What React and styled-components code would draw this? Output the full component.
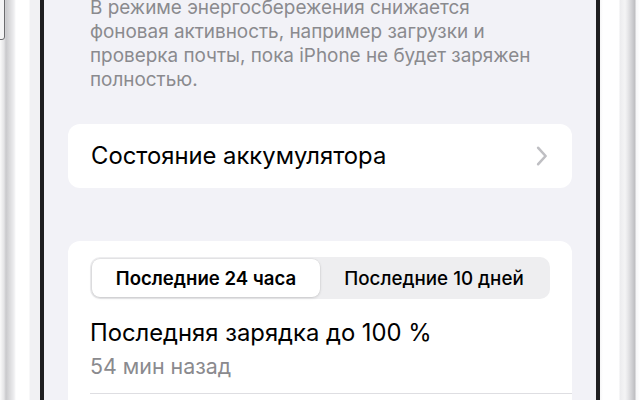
import styled, { createGlobalStyle } from "styled-components";
import { useState } from "react";

const Global = createGlobalStyle`
  html, body {
    margin: 0;
    padding: 0;
    background: #ffffff;
    overflow: hidden;
  }
  body {
    font-family: Inter, "Noto Sans", "Liberation Sans", sans-serif;
    -webkit-font-smoothing: antialiased;
  }
`;

export default function App() {
  const [range, setRange] = useState("24h");
  return (
    <>
      <Global />
      <Phone>
        <LeftRim>
          <SideButton />
        </LeftRim>
        <Bezel />
        <Screen>
          <Footnote>
            В режиме энергосбережения снижается
            <br />
            фоновая активность, например загрузки и
            <br />
            проверка почты, пока iPhone не будет заряжен
            <br />
            полностью.
          </Footnote>

          <Card>
            <LinkRow>
              <RowLabel>Состояние аккумулятора</RowLabel>
              <svg width="12" height="20" viewBox="0 0 12 20" fill="none">
                <path
                  d="M2.2 1.8l7.4 8.2-7.4 8.2"
                  stroke="#bfbfc3"
                  strokeWidth="2.6"
                  strokeLinecap="round"
                  strokeLinejoin="round"
                />
              </svg>
            </LinkRow>
          </Card>

          <UsageCard>
            <Segmented>
              <Segment $active={range === "24h"} onClick={() => setRange("24h")}>
                Последние 24 часа
              </Segment>
              <Segment $active={range === "10d"} onClick={() => setRange("10d")}>
                Последние 10 дней
              </Segment>
            </Segmented>
            <ChargeInfo>
              <RowLabel>Последняя зарядка до 100 %</RowLabel>
              <SubLabel>54 мин назад</SubLabel>
            </ChargeInfo>
            <Divider />
          </UsageCard>
        </Screen>
        <Bezel />
        <RightRim />
      </Phone>
    </>
  );
}

const Phone = styled.div`
  display: flex;
  width: 640px;
  height: 400px;
  overflow: hidden;
  background: #ffffff;
`;

const LeftRim = styled.div`
  position: relative;
  width: 40px;
  flex-shrink: 0;
  background: linear-gradient(
    to right,
    #fafafa 0px,
    #e4e4e6 4px,
    #c9c9cc 6px,
    #dcdcde 10px,
    #eeeef0 14px,
    #ffffff 16px,
    #ffffff 29px,
    #f1f1f3 30px,
    #f1f1f3 40px
  );
`;

const SideButton = styled.div`
  position: absolute;
  left: -3px;
  top: -10px;
  width: 6px;
  height: 48px;
  border: 1px solid #6b6b6e;
  border-radius: 0 0 3px 0;
  background: #f4f4f5;
`;

const RightRim = styled.div`
  width: 40px;
  flex-shrink: 0;
  background: linear-gradient(
    to right,
    #f6f6f7 0px,
    #ffffff 3px,
    #ffffff 19px,
    #ececee 20px,
    #f4f4f5 25px,
    #e6e6e8 28px,
    #cfcfd2 32px,
    #bdbdc0 35px,
    #f6f6f7 36px,
    #ffffff 40px
  );
`;

const Bezel = styled.div`
  width: 4px;
  flex-shrink: 0;
  background: #1f1f21;
`;

const Screen = styled.div`
  flex: 1;
  background: #f2f2f7;
  display: flex;
  flex-direction: column;
  padding: 0 24px;
`;

const Footnote = styled.p`
  margin: -4px 0 0;
  padding: 0 22px;
  font-size: 18.9px;
  line-height: 24px;
  color: #8a8a8e;
  white-space: nowrap;
`;

const Card = styled.div`
  margin-top: 32px;
  background: #ffffff;
  border-radius: 12px;
`;

const LinkRow = styled.div`
  display: flex;
  align-items: center;
  justify-content: space-between;
  height: 64px;
  padding: 0 24px 0 23px;
  cursor: pointer;
`;

const RowLabel = styled.div`
  font-size: 23.8px;
  line-height: 30px;
  color: #000000;
  white-space: nowrap;
`;

const UsageCard = styled(Card)`
  margin-top: 53px;
  padding: 16px 0 0 22px;
  border-radius: 12px 12px 0 0;
  flex: 1;
`;

const Segmented = styled.div`
  display: grid;
  grid-template-columns: 1fr 1fr;
  margin-right: 22px;
  padding: 2px;
  height: 42px;
  box-sizing: border-box;
  background: #eeeef0;
  border-radius: 10px;
`;

const Segment = styled.button`
  border: none;
  border-radius: 8px;
  font-family: inherit;
  font-size: ${(p) => (p.$active ? "18.6px" : "18.8px")};
  font-weight: ${(p) => (p.$active ? 600 : 500)};
  color: #000000;
  white-space: nowrap;
  background: ${(p) => (p.$active ? "#ffffff" : "transparent")};
  box-shadow: ${(p) =>
    p.$active ? "0 1px 3px rgba(0,0,0,0.14), 0 0 0 0.5px rgba(0,0,0,0.06)" : "none"};
  cursor: pointer;
`;

const ChargeInfo = styled.div`
  display: flex;
  flex-direction: column;
  gap: 5px;
  padding: 19px 0 14px 0;
`;

const SubLabel = styled.div`
  font-size: 21.4px;
  line-height: 26px;
  color: #8a8a8e;
`;

const Divider = styled.div`
  height: 1px;
  background: #dedee2;
`;
